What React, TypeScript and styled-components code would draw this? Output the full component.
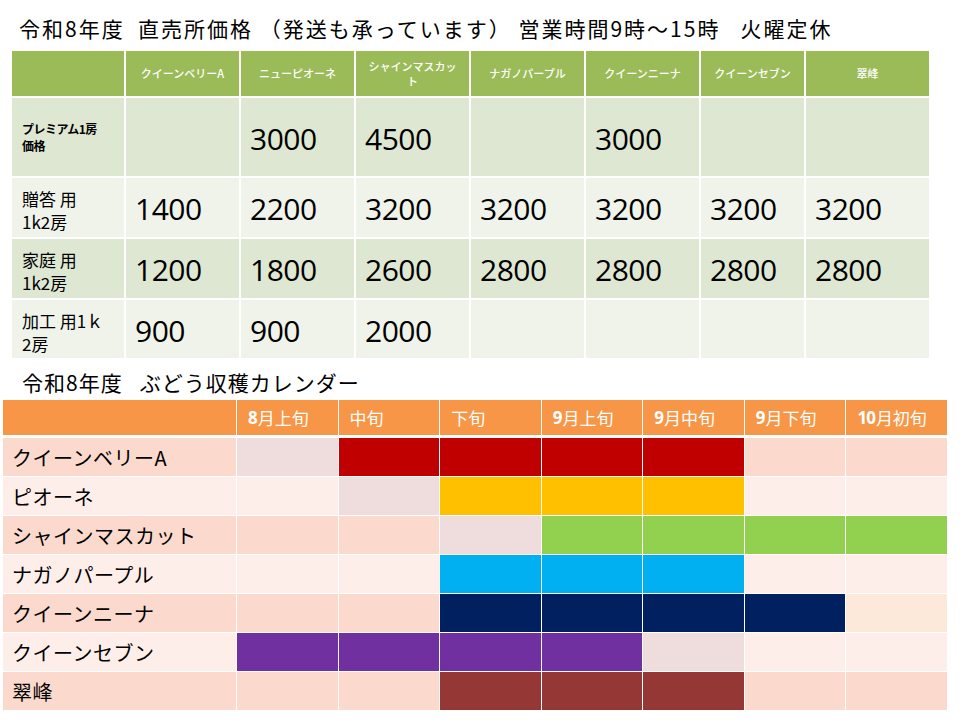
import React from 'react';
import styled, { createGlobalStyle } from 'styled-components';

const JP = '"Noto Sans CJK JP", "Noto Sans", sans-serif';
const NUM = '"Open Sans", "Noto Sans", sans-serif';

const GlobalStyle = createGlobalStyle`
    body {
        margin: 0;
        background: #ffffff;
        font-family: ${JP};
        color: #000000;
    }
`;

const Page = styled.div`
    width: 960px;
    height: 720px;
    overflow: hidden;
    background: #ffffff;
`;

const Title = styled.h1<{ h: number; top: number; left: number; spacing: number }>`
    margin: 0;
    box-sizing: border-box;
    height: ${p => p.h}px;
    padding: ${p => p.top}px 0 0 ${p => p.left}px;
    display: flex;
    align-items: center;
    font-family: ${JP};
    font-size: 21px;
    font-weight: 400;
    letter-spacing: ${p => p.spacing}px;
    white-space: pre;
    color: #000000;
`;

// ---------- price table ----------

const PriceGrid = styled.div`
    margin-left: 12px;
    width: 917px;
    display: grid;
    grid-template-columns: 112px 113px 113px 113px 113px 113px 103px 123px;
    grid-template-rows: 45px 78px 59px 59px 58px;
    gap: 2px;
    background: #ffffff;
`;

const PriceHead = styled.div`
    background: #9bbb59;
    color: #ffffff;
    font-size: 11px;
    line-height: 15px;
    font-weight: 500;
    display: flex;
    align-items: center;
    justify-content: center;
    text-align: center;
    white-space: pre-line;
`;

const PriceLabel = styled.div<{ bg: string; small?: boolean }>`
    background: ${p => p.bg};
    padding-left: 10px;
    display: flex;
    align-items: center;
    white-space: pre-line;
    font-size: ${p => (p.small ? '12px' : '17px')};
    line-height: ${p => (p.small ? '17px' : '23px')};
    font-weight: ${p => (p.small ? 700 : 400)};
    letter-spacing: ${p => (p.small ? '-0.5px' : '0')};
    padding-top: ${p => (p.small ? '0' : '5px')};
    box-sizing: border-box;
`;

const PriceValue = styled.div<{ bg: string }>`
    background: ${p => p.bg};
    padding-left: 9px;
    display: flex;
    align-items: center;
    font-family: ${NUM};
    font-size: 30px;
    letter-spacing: -0.5px;
    padding-top: 2px;
    box-sizing: border-box;
`;

// ---------- harvest calendar ----------

const CalGrid = styled.div`
    margin-left: 3px;
    width: 944px;
    display: grid;
    grid-template-columns: 233px repeat(7, 1fr);
    grid-template-rows: 37px repeat(7, 38px);
    column-gap: 1px;
    row-gap: 1px;
    background: #ffffff;
`;

const CalHead = styled.div`
    background: #f79646;
    color: #ffffff;
    font-size: 17px;
    padding-left: 11px;
    display: flex;
    align-items: center;
    margin-bottom: 2px;
`;

const HeadNum = styled.span`
    font-family: ${NUM};
    font-weight: 700;
    letter-spacing: -1px;
    margin-right: 1px;
`;

const CalName = styled.div<{ bg: string }>`
    background: ${p => p.bg};
    padding-left: 9px;
    display: flex;
    align-items: center;
    font-size: 20px;
    letter-spacing: 0.5px;
`;

const CalCell = styled.div<{ bg: string }>`
    background: ${p => p.bg};
`;

const GREEN_DARK = '#dee7d1';
const GREEN_LIGHT = '#eff3ea';

const varieties = [
    'クイーンベリーA',
    'ニューピオーネ',
    'シャインマスカッ\nト',
    'ナガノパープル',
    'クイーンニーナ',
    'クイーンセブン',
    '翠峰',
];

const priceRows = [
    { label: 'プレミアム1房\n価格', small: true, values: ['', '3000', '4500', '', '3000', '', ''] },
    { label: '贈答 用\n1k2房', values: ['1400', '2200', '3200', '3200', '3200', '3200', '3200'] },
    { label: '家庭 用\n1k2房', values: ['1200', '1800', '2600', '2800', '2800', '2800', '2800'] },
    { label: '加工 用1ｋ\n2房', values: ['900', '900', '2000', '', '', '', ''] },
];

const periods = [
    { num: '8', text: '月上旬' },
    { num: '', text: '中旬' },
    { num: '', text: '下旬' },
    { num: '9', text: '月上旬' },
    { num: '9', text: '月中旬' },
    { num: '9', text: '月下旬' },
    { num: '10', text: '月初旬' },
];

const BAND_A = '#fbdacd';
const BAND_B = '#fdeee9';
const MUTE = '#efdcdc';
const RED = '#c00000';
const YELLOW = '#ffc000';
const LIME = '#92d050';
const CYAN = '#00b0f0';
const NAVY = '#002060';
const PURPLE = '#7030a0';
const BROWN = '#953735';
const PEACH = '#fde9da';

type Fill = string | null;

const harvest: { name: string; band: string; cells: Fill[] }[] = [
    { name: 'クイーンベリーA', band: BAND_A, cells: [MUTE, RED, RED, RED, RED, null, null] },
    { name: 'ピオーネ', band: BAND_B, cells: [null, MUTE, YELLOW, YELLOW, YELLOW, null, null] },
    { name: 'シャインマスカット', band: BAND_A, cells: [null, null, MUTE, LIME, LIME, LIME, LIME] },
    { name: 'ナガノパープル', band: BAND_B, cells: [null, null, CYAN, CYAN, CYAN, null, null] },
    { name: 'クイーンニーナ', band: BAND_A, cells: [null, null, NAVY, NAVY, NAVY, NAVY, PEACH] },
    { name: 'クイーンセブン', band: BAND_B, cells: [PURPLE, PURPLE, PURPLE, PURPLE, MUTE, null, null] },
    { name: '翠峰', band: BAND_A, cells: [null, null, BROWN, BROWN, BROWN, null, null] },
];

const App: React.FC = () => {
    return (
        <Page>
            <GlobalStyle />
            <Title h={51} top={5} left={19} spacing={2}>
                {'令和8年度  直売所価格 （発送も承っています） 営業時間9時～15時   火曜定休'}
            </Title>
            <PriceGrid>
                <PriceHead />
                {varieties.map(v => (
                    <PriceHead key={v}>{v}</PriceHead>
                ))}
                {priceRows.map((row, i) => {
                    const bg = i % 2 === 0 ? GREEN_DARK : GREEN_LIGHT;
                    return (
                        <React.Fragment key={row.label}>
                            <PriceLabel bg={bg} small={row.small}>
                                {row.label}
                            </PriceLabel>
                            {row.values.map((v, j) => (
                                <PriceValue key={j} bg={bg}>
                                    {v}
                                </PriceValue>
                            ))}
                        </React.Fragment>
                    );
                })}
            </PriceGrid>
            <Title h={42} top={6} left={22} spacing={1}>
                {'令和8年度   ぶどう収穫カレンダー'}
            </Title>
            <CalGrid>
                <CalHead />
                {periods.map((p, i) => (
                    <CalHead key={i}>
                        {p.num && <HeadNum>{p.num}</HeadNum>}
                        {p.text}
                    </CalHead>
                ))}
                {harvest.map(row => (
                    <React.Fragment key={row.name}>
                        <CalName bg={row.band}>{row.name}</CalName>
                        {row.cells.map((c, j) => (
                            <CalCell key={j} bg={c ?? row.band} />
                        ))}
                    </React.Fragment>
                ))}
            </CalGrid>
        </Page>
    );
};

export default App;
